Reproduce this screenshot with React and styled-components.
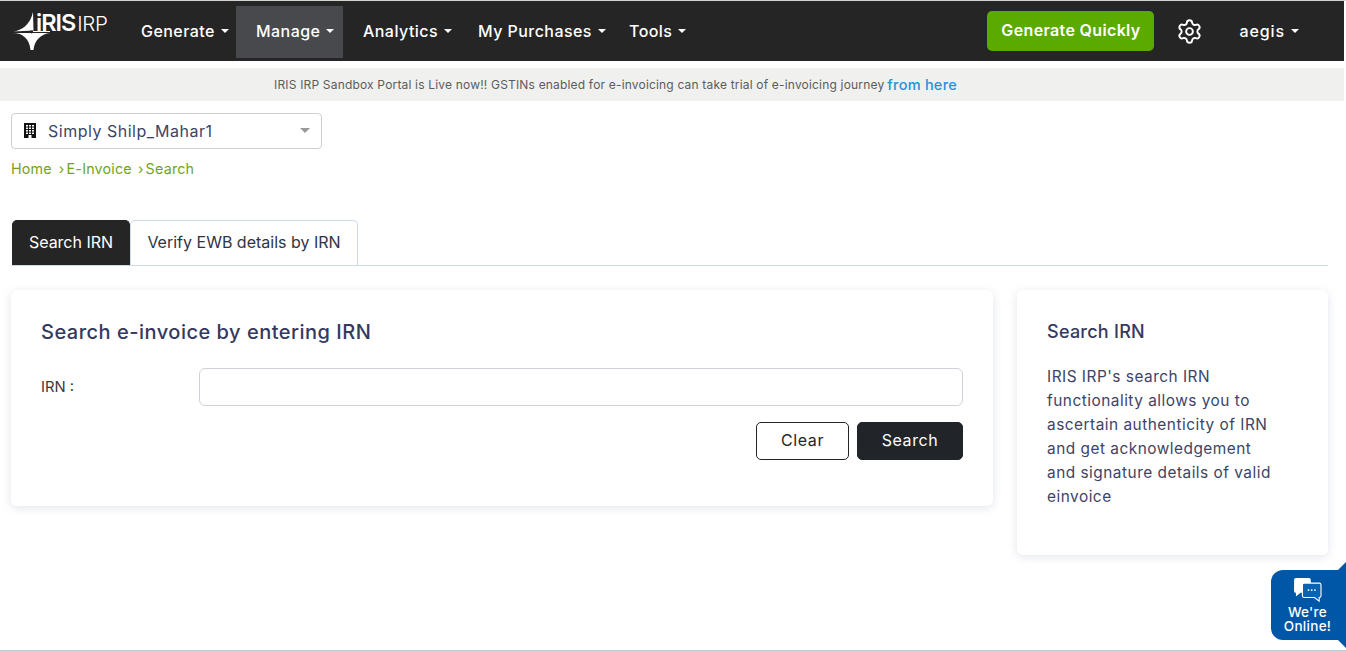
import React from 'react';
import styled, { createGlobalStyle } from 'styled-components';
import { Settings } from 'lucide-react';

const GlobalStyle = createGlobalStyle`
  html, body {
    margin: 0;
    padding: 0;
    background: #fff;
    overflow: hidden;
  }
  * {
    box-sizing: border-box;
  }
`;

const Page = styled.div`
  position: relative;
  width: 1346px;
  height: 651px;
  overflow: hidden;
  padding-top: 1px;
  background: #fff;
  box-shadow: inset 0 1px 0 #d4d4d4, inset 0 -1px 0 #b9d0d8;
  font-family: Inter, "Open Sans", sans-serif;
  color: #34395e;
`;

const NavBar = styled.nav`
  width: 1344px;
  height: 60px;
  background: #252525;
  display: flex;
  align-items: center;
  padding-left: 14px;
`;

const Logo = styled.div`
  width: 107px;
  height: 42px;
  position: relative;
  flex: none;
  display: flex;
  align-items: baseline;
  color: #fff;
  white-space: nowrap;
`;

const LogoStar = styled.svg`
  position: absolute;
  left: -1px;
  top: 2px;
`;

const LogoText = styled.span`
  margin: -5px 0 0 22px;
  font-size: 23.5px;
  line-height: 28px;
  font-weight: 600;
  letter-spacing: -1px;
`;

const LogoLight = styled.span`
  margin-left: 2px;
  font-size: 20.5px;
  line-height: 28px;
  font-weight: 300;
  letter-spacing: -0.3px;
`;

const NavItem = styled.div`
  width: ${(props) => props.width}px;
  height: 52px;
  margin-top: 2px;
  padding: 0 0 2px 20px;
  flex: none;
  display: flex;
  align-items: center;
  background: ${(props) => (props.active ? '#48494d' : 'transparent')};
  color: #fff;
  font-size: 16px;
  font-weight: 500;
  letter-spacing: 0.45px;
  white-space: nowrap;
`;

const Caret = styled.span`
  display: inline-block;
  margin-left: 6px;
  border-top: 4px solid ${(props) => props.color || '#fff'};
  border-left: 4px solid transparent;
  border-right: 4px solid transparent;
`;

const NavRight = styled.div`
  margin-left: auto;
  display: flex;
  align-items: center;
  padding-right: 45px;
  color: #fff;
`;

const QuickButton = styled.button`
  width: 167px;
  height: 40px;
  padding: 0 0 3px;
  border: 0;
  border-radius: 5px;
  background: #5aaa00;
  color: #fff;
  font-family: inherit;
  font-size: 16px;
  font-weight: 600;
  letter-spacing: 0.35px;
`;

const GearWrap = styled.div`
  display: flex;
  margin: 0 36px 0 22px;
`;

const UserName = styled.div`
  font-size: 16px;
  font-weight: 500;
  letter-spacing: 0.9px;
  display: flex;
  align-items: center;
`;

const Notice = styled.div`
  width: 1344px;
  height: 33px;
  margin-top: 7px;
  padding-right: 113px;
  background: #f0f0ee;
  display: flex;
  align-items: center;
  justify-content: center;
  font-size: 12px;
  letter-spacing: 0.18px;
  color: #5c5c5c;
  white-space: nowrap;
`;

const NoticeLink = styled.a`
  margin-left: 3px;
  color: #2490e0;
  font-size: 14.5px;
  font-weight: 500;
  letter-spacing: 0.25px;
`;

const Main = styled.main`
  width: 1317px;
  margin-left: 11px;
`;

const CompanySelect = styled.div`
  width: 311px;
  height: 36px;
  margin-top: 12px;
  display: flex;
  align-items: center;
  padding: 0 11px 1px 12px;
  border: 1px solid #cfcfcf;
  border-radius: 4px;
  font-size: 16px;
  color: #3d4465;
  letter-spacing: 0.5px;
`;

const BuildingIcon = styled.svg`
  flex: none;
  margin-right: 12px;
`;

const SelectCaret = styled(Caret)`
  margin-left: auto;
  border-top-width: 5px;
  border-left-width: 5px;
  border-right-width: 5px;
`;

const Breadcrumb = styled.div`
  margin-top: 9px;
  height: 20px;
  display: flex;
  align-items: center;
  font-size: 14.3px;
  letter-spacing: 0.2px;
  color: #72a31c;
  white-space: nowrap;
`;

const Crumb = styled.span`
  margin-right: ${(props) => props.gap}px;
`;

const Tabs = styled.div`
  margin-top: 42px;
  height: 46px;
  display: flex;
  border-bottom: 1px solid #cfd9e8;
  padding-left: 1px;
`;

const Tab = styled.div`
  width: ${(props) => props.width}px;
  padding-bottom: 2px;
  display: flex;
  align-items: center;
  justify-content: center;
  font-size: 16px;
  border-radius: 5px 5px 0 0;
  white-space: nowrap;
  background: ${(props) => (props.active ? '#252525' : '#fff')};
  color: ${(props) => (props.active ? '#fff' : '#2f3545')};
  border: 1px solid ${(props) => (props.active ? '#252525' : '#cfd9e8')};
  border-bottom: 0;
`;

const Columns = styled.div`
  margin-top: 24px;
  display: flex;
  align-items: flex-start;
  gap: 24px;
`;

const Card = styled.section`
  width: ${(props) => props.width}px;
  height: ${(props) => props.height}px;
  background: #fff;
  border-radius: 6px;
  box-shadow: 0 2px 10px rgba(60, 70, 120, 0.14);
`;

const SearchCard = styled(Card)`
  padding: 28px 30px 0;
`;

const InfoCard = styled(Card)`
  padding: 30px 46px 0 30px;
`;

const CardTitle = styled.h2`
  margin: 0;
  font-size: 20px;
  line-height: 28px;
  font-weight: 500;
  color: #34395e;
  letter-spacing: 0.5px;
`;

const FormRow = styled.div`
  margin-top: 22px;
  display: flex;
  align-items: center;
`;

const FieldLabel = styled.label`
  width: 158px;
  font-size: 14.8px;
  color: #3e3a3a;
`;

const TextInput = styled.input`
  flex: 1;
  height: 38px;
  border: 1px solid #cfd2d8;
  border-radius: 6px;
  background: #fff;
`;

const FormActions = styled.div`
  margin-top: 16px;
  display: flex;
  justify-content: flex-end;
  gap: 8px;
`;

const ActionButton = styled.button`
  width: ${(props) => props.width}px;
  height: 38px;
  padding: 0 0 2px;
  border-radius: 5px;
  border: 1px solid #212529;
  background: ${(props) => (props.primary ? '#212529' : '#fff')};
  color: ${(props) => (props.primary ? '#fff' : '#212529')};
  font-family: inherit;
  font-size: 16px;
  letter-spacing: 0.6px;
`;

const InfoTitle = styled.h3`
  margin: 0;
  font-size: 18px;
  line-height: 24px;
  font-weight: 500;
  letter-spacing: 0.25px;
  color: #34395e;
`;

const InfoText = styled.p`
  margin: 21px 0 0;
  font-size: 15.4px;
  line-height: 24px;
  letter-spacing: 0.5px;
  color: #3d4465;
`;

const ChatBadge = styled.div`
  position: absolute;
  left: 1271px;
  top: 570px;
  width: 75px;
  height: 70px;
  padding: 8px 2px 0 0;
  background: #0057a8;
  border-radius: 12px 0 0 12px;
  color: #fff;
  display: flex;
  flex-direction: column;
  align-items: center;
  font-size: 13.5px;
  font-weight: 500;
  letter-spacing: 0.3px;
  line-height: 14px;
  text-align: center;
  &::before,
  &::after {
    content: '';
    position: absolute;
    right: 0;
    width: 0;
    height: 0;
    border-left: 8px solid transparent;
  }
  &::before {
    top: -8px;
    border-bottom: 8px solid #0057a8;
  }
  &::after {
    bottom: -8px;
    border-top: 8px solid #0057a8;
  }
`;

const ChatSvg = styled.svg`
  margin-bottom: 1px;
`;

const ChatIcon = () => (
  <ChatSvg width="28" height="26" viewBox="0 0 30 28">
    <path d="M2 0h14a2 2 0 0 1 2 2v12a2 2 0 0 1-2 2H7l-5 4v-4a2 2 0 0 1-2-2V2a2 2 0 0 1 2-2z" fill="#fff" />
    <path d="M11 5.5h16a2 2 0 0 1 2 2V19a2 2 0 0 1-2 2v4l-5-4H11a2 2 0 0 1-2-2V7.5a2 2 0 0 1 2-2z" fill="#0a62b3" stroke="#fff" strokeWidth="1.2" />
    <circle cx="15.5" cy="13" r="1" fill="#fff" />
    <circle cx="19" cy="13" r="1" fill="#fff" />
    <circle cx="22.5" cy="13" r="1" fill="#fff" />
  </ChatSvg>
);

// office block: solid body with a grid of windows and a door
const Building = () => (
  <BuildingIcon width="12" height="15" viewBox="0 0 12 15">
    <rect width="12" height="15" fill="#111" />
    {[0, 1, 2, 3].map((row) =>
      [0, 1, 2].map((col) => (
        <rect key={`${row}-${col}`} x={2 + col * 3} y={2 + row * 2.5} width="2" height="1.5" fill="#fff" />
      ))
    )}
    <rect x="4.5" y="12" width="3" height="3" fill="#fff" />
  </BuildingIcon>
);

const App = () => (
  <Page>
    <GlobalStyle />
    <NavBar>
      <Logo>
        <LogoStar width="38" height="40" viewBox="0 0 38 40">
          <path d="M20 0 L20.5 18.5 L0 19.5 C9 18.5 17 13 20 0 Z" fill="#fff" />
          <path d="M0 21 C10 21 16.5 27 17.5 38 L20.5 38 C21.5 28 28 22 37 21 Z" fill="#fff" />
          <rect x="20" y="19" width="17" height="1" fill="#fff" />
          <circle cx="18.5" cy="20" r="1.4" fill="#252525" />
        </LogoStar>
        <LogoText>iRIS</LogoText>
        <LogoLight>IRP</LogoLight>
      </Logo>
      <NavItem width={115}>Generate<Caret /></NavItem>
      <NavItem width={107} active>Manage<Caret /></NavItem>
      <NavItem width={115}>Analytics<Caret /></NavItem>
      <NavItem width={151}>My Purchases<Caret /></NavItem>
      <NavItem width={90}>Tools<Caret /></NavItem>
      <NavRight>
        <QuickButton>Generate Quickly</QuickButton>
        <GearWrap><Settings size={27} strokeWidth={1.7} /></GearWrap>
        <UserName>aegis<Caret /></UserName>
      </NavRight>
    </NavBar>
    <Notice>
      IRIS IRP Sandbox Portal is Live now!! GSTINs enabled for e-invoicing can take trial of e-invoicing journey
      <NoticeLink>from here</NoticeLink>
    </Notice>
    <Main>
      <CompanySelect>
        <Building />
        Simply Shilp_Mahar1
        <SelectCaret color="#999" />
      </CompanySelect>
      <Breadcrumb>
        <Crumb gap={7}>Home</Crumb>
        <Crumb gap={2}>›</Crumb>
        <Crumb gap={6}>E-Invoice</Crumb>
        <Crumb gap={2}>›</Crumb>
        <Crumb gap={0}>Search</Crumb>
      </Breadcrumb>
      <Tabs>
        <Tab width={118} active>Search IRN</Tab>
        <Tab width={228}>Verify EWB details by IRN</Tab>
      </Tabs>
      <Columns>
        <SearchCard width={982} height={216}>
          <CardTitle>Search e-invoice by entering IRN</CardTitle>
          <FormRow>
            <FieldLabel>IRN :</FieldLabel>
            <TextInput />
          </FormRow>
          <FormActions>
            <ActionButton width={93}>Clear</ActionButton>
            <ActionButton width={106} primary>Search</ActionButton>
          </FormActions>
        </SearchCard>
        <InfoCard width={311} height={265}>
          <InfoTitle>Search IRN</InfoTitle>
          <InfoText>
            IRIS IRP's search IRN functionality allows you to ascertain authenticity of IRN and get acknowledgement and signature details of valid einvoice
          </InfoText>
        </InfoCard>
      </Columns>
    </Main>
    <ChatBadge>
      <ChatIcon />
      We're<br />Online!
    </ChatBadge>
  </Page>
);

export default App;
